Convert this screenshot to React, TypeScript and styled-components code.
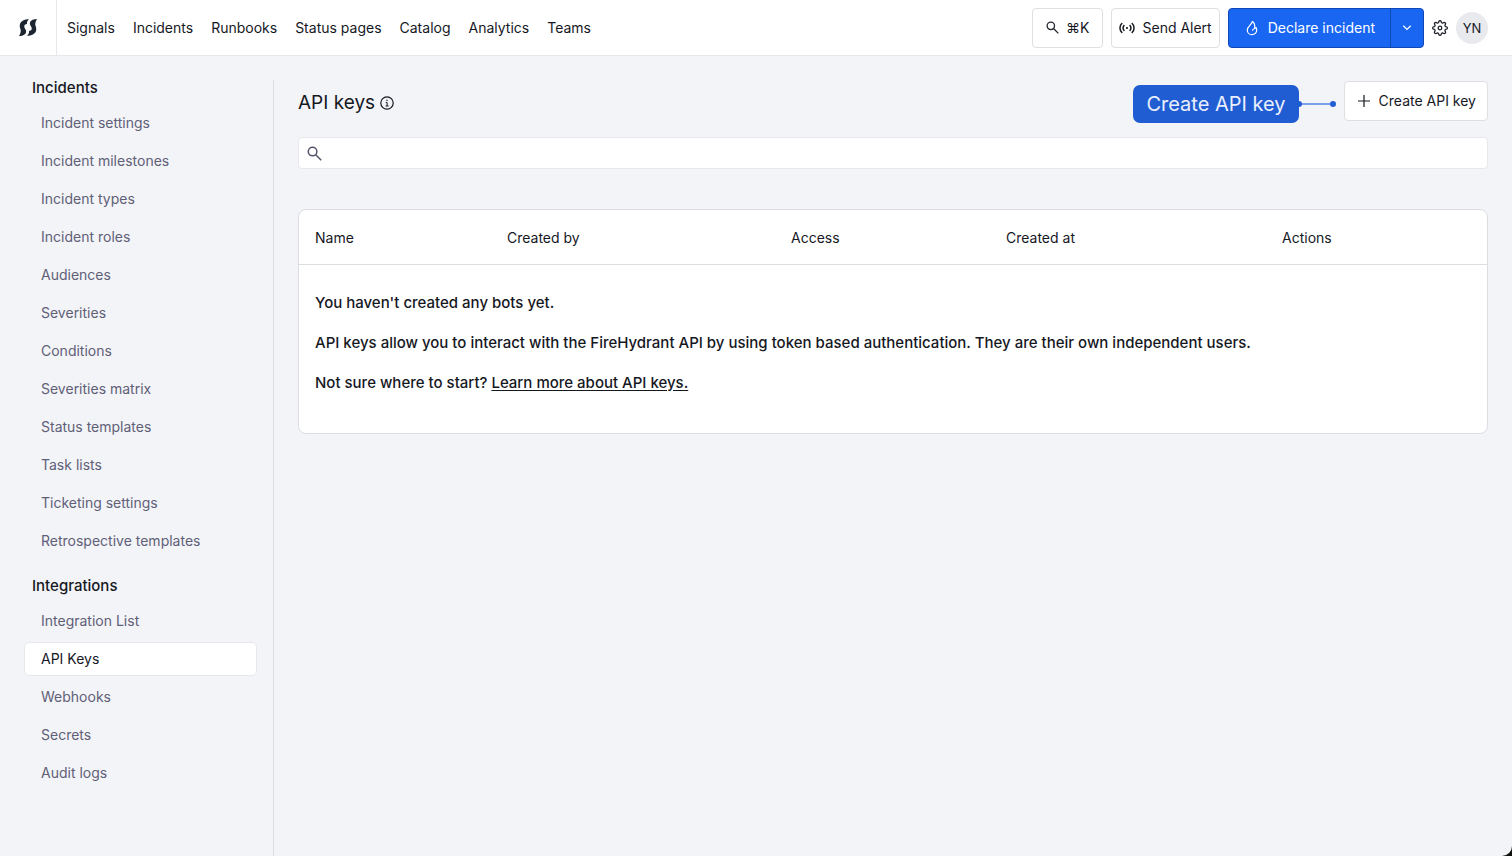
import React from "react";
import styled, { createGlobalStyle } from "styled-components";

const GlobalStyle = createGlobalStyle`
  *, *::before, *::after { box-sizing: border-box; }
  body {
    margin: 0;
    background: #111;
    color: #16181f;
    font-family: Inter, "Liberation Sans", sans-serif;
    font-size: 14px;
    line-height: 20px;
  }
  button, input { font: inherit; color: inherit; }
  a { color: inherit; text-decoration: none; }
`;

const Page = styled.div`
  display: flex;
  flex-direction: column;
  min-height: 100vh;
  background: #f3f4f8;
  border-bottom-right-radius: 10px;
`;

const TopBar = styled.header`
  display: flex;
  align-items: center;
  height: 56px;
  padding-right: 24px;
  background: #fff;
  border-bottom: 1px solid #e7e8ec;
`;

const LogoLink = styled.a`
  display: flex;
  align-items: center;
  justify-content: center;
  align-self: stretch;
  width: 57px;
  border-right: 1px solid #e7e8ec;
`;

const MainNav = styled.nav`
  display: flex;
  gap: 18px;
  padding-left: 10px;
  white-space: nowrap;
`;

const Tools = styled.div`
  display: flex;
  align-items: center;
  gap: 8px;
  margin-left: auto;
`;

const Button = styled.button<{ $pad?: number }>`
  display: inline-flex;
  align-items: center;
  gap: 7px;
  height: 40px;
  padding: 0 ${(p) => p.$pad ?? 7}px;
  background: #fff;
  border: 1px solid #dedfe3;
  border-radius: 4px;
  white-space: nowrap;
  cursor: pointer;
`;

const SplitButton = styled.div`
  display: flex;
  height: 40px;
  color: #fff;
  background: #1866f2;
  border: 1px solid #1049b4;
  border-radius: 4px;
`;

const SplitPart = styled.button<{ $divided?: boolean }>`
  display: inline-flex;
  align-items: center;
  gap: 8px;
  padding: 0 ${(p) => (p.$divided ? 8 : 15)}px;
  background: none;
  border: 0;
  border-left: ${(p) => (p.$divided ? "1px solid #1049b4" : "0")};
  white-space: nowrap;
  cursor: pointer;
`;

const IconButton = styled.button`
  display: inline-flex;
  padding: 0;
  background: none;
  border: 0;
  cursor: pointer;
`;

const Avatar = styled.button`
  width: 32px;
  height: 32px;
  padding: 0;
  font-size: 13px;
  background: #e9eaee;
  border: 0;
  border-radius: 50%;
`;

const Body = styled.div`
  display: flex;
  flex: 1;
  padding: 24px 24px 0;
`;

const Sidebar = styled.nav`
  flex: none;
  width: 250px;
  padding-right: 16px;
  border-right: 1px solid #dcdde3;
`;

const GroupTitle = styled.h2`
  margin: 0 0 11px;
  padding: 0 8px;
  font-size: 15px;
  line-height: 15px;
  font-weight: 500;
`;

const LinkList = styled.ul`
  display: flex;
  flex-direction: column;
  gap: 4px;
  margin: 0 0 20px;
  padding: 0;
  list-style: none;
`;

const SideLink = styled.a<{ $active?: boolean }>`
  display: block;
  padding: 6px 16px;
  border: 1px solid ${(p) => (p.$active ? "#e7e8ec" : "transparent")};
  border-radius: 5px;
  color: ${(p) => (p.$active ? "#16181f" : "#5f6077")};
  background: ${(p) => (p.$active ? "#fff" : "none")};
`;

const Content = styled.main`
  flex: 1;
  min-width: 0;
  padding-left: 24px;
`;

const TitleRow = styled.div`
  display: flex;
  align-items: center;
  height: 42px;
`;

const Heading = styled.div`
  display: flex;
  align-items: center;
  gap: 5px;
  padding-top: 4px;
`;

const Title = styled.h1`
  margin: 0;
  font-size: 19px;
  line-height: 24px;
  font-weight: 400;
`;

const Callout = styled.div`
  display: flex;
  align-items: center;
  margin: 6px 8px 0 auto;
`;

const CalloutLabel = styled.span`
  padding: 7px 13px;
  border-radius: 7px;
  font-size: 20px;
  line-height: 24px;
  color: #e9effc;
  background: #205dd3;
  white-space: nowrap;
`;

const SearchBox = styled.label`
  display: flex;
  align-items: center;
  gap: 8px;
  height: 32px;
  margin-top: 15px;
  padding: 0 8px;
  background: #fff;
  border: 1px solid #e7e8ec;
  border-radius: 4px;
`;

const SearchInput = styled.input`
  flex: 1;
  min-width: 0;
  padding: 0;
  border: 0;
  outline: 0;
  background: none;
`;

const TableCard = styled.div`
  margin-top: 40px;
  background: #fff;
  border: 1px solid #dcdde1;
  border-radius: 8px;
`;

const Table = styled.table`
  width: 100%;
  table-layout: fixed;
  border-collapse: collapse;
`;

const HeadCell = styled.th<{ $weight: number }>`
  width: ${(p) => (p.$weight / 1188) * 100}%;
  height: 54px;
  padding: 2px 16px 0;
  border-bottom: 1px solid #dcdde1;
  font-weight: 400;
  text-align: left;
`;

const EmptyCell = styled.td`
  padding: 26px 16px 38px;
  font-size: 15px;
  line-height: 24px;
  font-weight: 500;
`;

const Note = styled.p`
  margin: 0;
  & + & { margin-top: 16px; }
`;

const TextLink = styled.a`
  text-decoration: underline;
  text-underline-offset: 2px;
`;

const gearOutline = Array.from({ length: 96 }, (_, i) => {
  const a = (i / 96) * Math.PI * 2;
  const r = 6.4 + 1.0 * Math.tanh(1.6 * Math.cos(8 * a));
  return `${i ? "L" : "M"}${(8 + r * Math.sin(a)).toFixed(2)} ${(8 - r * Math.cos(a)).toFixed(2)}`;
}).join("") + "Z";

const logoStroke = "M30 0C16 1 6 6 3 15c-2 6 0 12 2 17 1 6-1 12-5 19 8 0 15-2 19-7 3-4 3-8 1-12-2-4-5-7-4-12 1-3 3-4 8-5-1-6 2-11 6-15Z";

const LogoIcon = () => (
  <svg width="18" height="17" viewBox="0 0 54 51" fill="#1d2530" aria-hidden="true">
    <path d={logoStroke} />
    <path d={logoStroke} transform="rotate(180 27 25.5)" />
  </svg>
);

const SearchIcon = ({ size, color }: { size: number; color: string }) => (
  <svg width={size} height={size} viewBox="0 0 14 14" fill="none" stroke={color} strokeWidth="1.4" aria-hidden="true">
    <circle cx="5.2" cy="5.2" r="4" />
    <path d="M8.1 8.1 13.3 13.3" />
  </svg>
);

const AlertIcon = () => (
  <svg width="16" height="16" viewBox="0 0 16 16" fill="none" stroke="#16181f" strokeWidth="1.5" aria-hidden="true">
    <path d="M3.2 3C.2 5.6.2 10.4 3.2 13M12.8 3c3 2.600 3 7.400 0 10M5.400 5.200c-1.800 1.500-1.800 4.100 0 5.600M10.600 5.200c1.800 1.500 1.800 4.100 0 5.600" />
    <circle cx="8" cy="8" r="1.1" fill="#16181f" stroke="none" />
  </svg>
);

const FlameIcon = () => (
  <svg width="16" height="16" viewBox="0 0 16 16" fill="none" stroke="#fff" strokeWidth="1.2" strokeLinejoin="round" aria-hidden="true">
    <path d="M8.3 1.3C8.300 4.600 3.300 6 3.300 10.200c0 2.600 2 4.500 4.700 4.500s4.700-1.900 4.700-4.500c0-1-.2-1.800-.6-2.600-1 1.200-3.500 1-3.700 3.200M10.600 7.800C11.100 5.200 10.200 2.700 8.300 1.300" />
  </svg>
);

const ChevronIcon = () => (
  <svg width="16" height="16" viewBox="0 0 16 16" fill="none" stroke="#fff" strokeWidth="1.3" aria-hidden="true">
    <path d="m4.3 5.700 3.700 3.700 3.700-3.700" />
  </svg>
);

const GearIcon = () => (
  <svg width="16" height="16" viewBox="0 0 16 16" fill="none" stroke="#23252e" strokeWidth="1.3" strokeLinejoin="round" aria-hidden="true">
    <path d={gearOutline} />
    <circle cx="8" cy="8" r="1.8" />
  </svg>
);

const PlusIcon = () => (
  <svg width="16" height="16" viewBox="0 0 16 16" fill="none" stroke="#16181f" strokeWidth="1.2" aria-hidden="true">
    <path d="M8 2v12M2 8h12" />
  </svg>
);

const InfoIcon = () => (
  <svg width="14" height="14" viewBox="0 0 14 14" fill="none" stroke="#16181f" strokeWidth="1.2" aria-hidden="true">
    <circle cx="7" cy="7" r="6.2" />
    <path d="M5.8 6.400H7.100V10M5.600 10h3" strokeWidth="1" />
    <circle cx="7" cy="4.300" r=".7" fill="#16181f" stroke="none" />
  </svg>
);

const Pointer = () => (
  <svg width="37" height="8" viewBox="0 0 37 8" fill="#205dd3" aria-hidden="true">
    <path d="M0 4h34" stroke="#7ba0ea" strokeWidth="2" />
    <circle cx="0" cy="4" r="3" />
    <circle cx="34" cy="4" r="3" />
  </svg>
);

const navItems = ["Signals", "Incidents", "Runbooks", "Status pages", "Catalog", "Analytics", "Teams"];

const groups = [
  {
    title: "Incidents",
    links: [
      "Incident settings", "Incident milestones", "Incident types", "Incident roles",
      "Audiences", "Severities", "Conditions", "Severities matrix",
      "Status templates", "Task lists", "Ticketing settings", "Retrospective templates",
    ],
  },
  { title: "Integrations", links: ["Integration List", "API Keys", "Webhooks", "Secrets", "Audit logs"] },
];

const columns = [
  { label: "Name", weight: 192 },
  { label: "Created by", weight: 284 },
  { label: "Access", weight: 215 },
  { label: "Created at", weight: 276 },
  { label: "Actions", weight: 221 },
];

export default function App() {
  return (
    <>
      <GlobalStyle />
      <Page>
        <TopBar>
          <LogoLink href="#" aria-label="Home"><LogoIcon /></LogoLink>
          <MainNav>
            {navItems.map((item) => <a href="#" key={item}>{item}</a>)}
          </MainNav>
          <Tools>
            <Button $pad={13} aria-label="Search"><SearchIcon size={13} color="#23252e" />⌘K</Button>
            <Button><AlertIcon />Send Alert</Button>
            <SplitButton>
              <SplitPart><FlameIcon />Declare incident</SplitPart>
              <SplitPart $divided aria-label="More incident options"><ChevronIcon /></SplitPart>
            </SplitButton>
            <IconButton aria-label="Settings"><GearIcon /></IconButton>
            <Avatar>YN</Avatar>
          </Tools>
        </TopBar>
        <Body>
          <Sidebar>
            {groups.map((group) => (
              <section key={group.title}>
                <GroupTitle>{group.title}</GroupTitle>
                <LinkList>
                  {group.links.map((link) => (
                    <li key={link}><SideLink href="#" $active={link === "API Keys"}>{link}</SideLink></li>
                  ))}
                </LinkList>
              </section>
            ))}
          </Sidebar>
          <Content>
            <TitleRow>
              <Heading>
                <Title>API keys</Title>
                <IconButton aria-label="About API keys"><InfoIcon /></IconButton>
              </Heading>
              <Callout><CalloutLabel>Create API key</CalloutLabel><Pointer /></Callout>
              <Button $pad={11}><PlusIcon />Create API key</Button>
            </TitleRow>
            <SearchBox>
              <SearchIcon size={15} color="#55566b" />
              <SearchInput type="text" aria-label="Search API keys" />
            </SearchBox>
            <TableCard>
              <Table>
                <thead>
                  <tr>{columns.map((c) => <HeadCell key={c.label} $weight={c.weight}>{c.label}</HeadCell>)}</tr>
                </thead>
                <tbody>
                  <tr>
                    <EmptyCell colSpan={5}>
                      <Note>You haven't created any bots yet.</Note>
                      <Note>API keys allow you to interact with the FireHydrant API by using token based authentication. They are their own independent users.</Note>
                      <Note>Not sure where to start? <TextLink href="#">Learn more about API keys.</TextLink></Note>
                    </EmptyCell>
                  </tr>
                </tbody>
              </Table>
            </TableCard>
          </Content>
        </Body>
      </Page>
    </>
  );
}
